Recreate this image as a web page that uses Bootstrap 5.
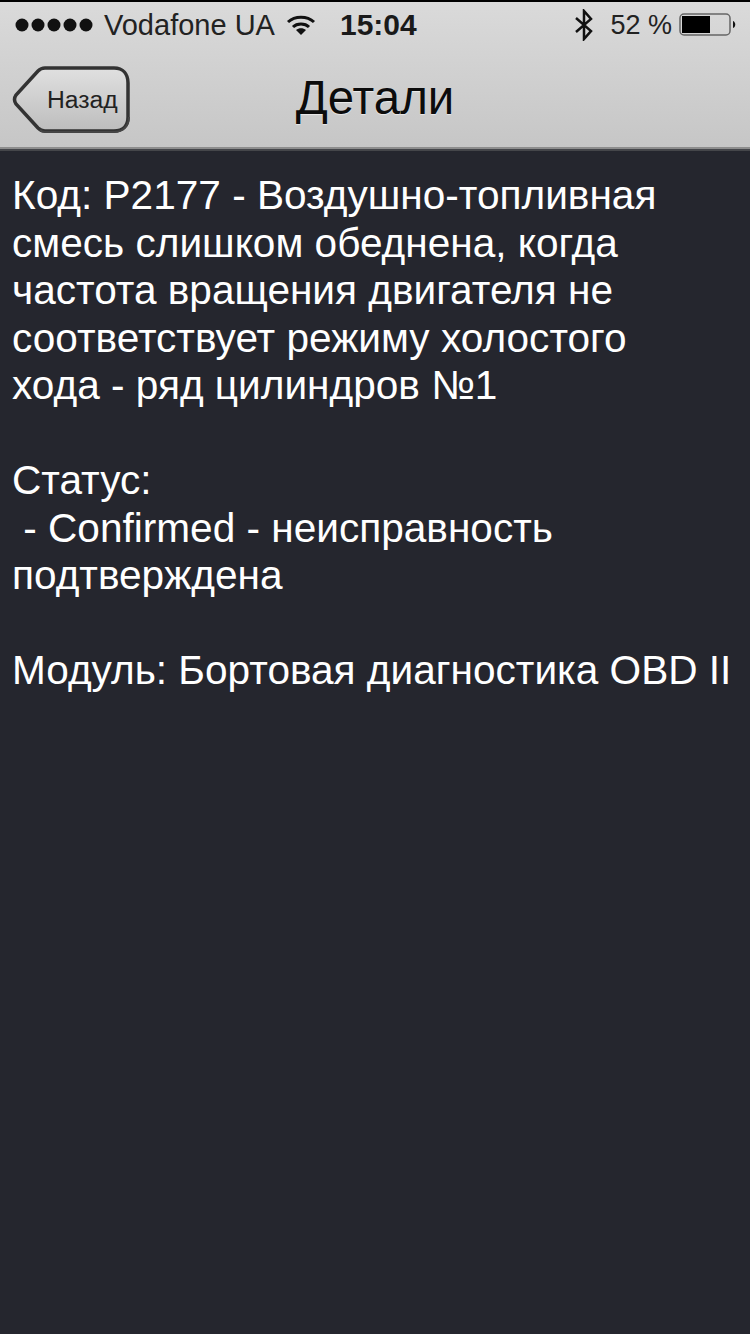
<!DOCTYPE html>
<html lang="ru">
<head>
    <meta charset="UTF-8">
    <title>Детали</title>
    <link href="https://cdn.jsdelivr.net/npm/bootstrap@5.3.0/dist/css/bootstrap.min.css" rel="stylesheet">
    <style>
        html, body { height: 100%; }
        body { background: #25262e; font-family: "Liberation Sans", Arial, sans-serif; color: #fff; overflow: hidden; }
        .top-area { height: 151px; border-top: 2px solid #000; background: linear-gradient(#dadada, #c6c6c6); border-bottom: 2px solid #45464a; box-shadow: inset 0 -2px 0 #8d8d8d; color: #111; }
        .status-row { height: 46px; font-size: 27px; padding-left: 15px; padding-right: 13px; color: #222; }
        .signal-dots { width: 82px; }
        .carrier { margin-left: 7px; width: 182px; font-size: 29px; margin-top: 2px; }
        .wifi-icon { width: 30px; height: 20px; }
        .clock { margin-left: 24px; font-weight: 700; font-size: 30px; color: #1a1a1a; margin-top: -1px; }
        .bt-icon { width: 20px; height: 32px; margin-right: 16px; }
        .percent { margin-right: 7px; }
        .title-row { height: 99px; }
        .back-btn { position: absolute; left: 12px; top: 18px; width: 120px; height: 68px; }
        .back-label { position: absolute; left: 47px; top: 38px; font-size: 24.7px; line-height: 28px; color: #222; }
        .page-title { font-size: 47.4px; line-height: 52px; color: #0c0c0c; text-shadow: 0 1px 1px rgba(255, 255, 255, .6); }
        .detail-text { padding: 21px 12px 0; font-size: 40.6px; line-height: 47.5px; white-space: pre-wrap; }
    </style>
</head>
<body>
    <div class="top-area">
        <div class="status-row d-flex align-items-center">
            <svg class="signal-dots" height="14" viewBox="0 0 82 14">
                <circle cx="7" cy="7" r="6.5" fill="#111"/><circle cx="23" cy="7" r="6.5" fill="#111"/><circle cx="39" cy="7" r="6.5" fill="#111"/><circle cx="55" cy="7" r="6.5" fill="#111"/><circle cx="71" cy="7" r="6.5" fill="#111"/>
            </svg>
            <span class="carrier text-nowrap">Vodafone UA</span>
            <svg class="wifi-icon" viewBox="0 0 30 20" fill="none" stroke="#111" stroke-width="3">
                <path d="M2 7C9 .5 21 .5 28 7"/><path d="M7 12C11 8 19 8 23 12"/><path d="M15 20L10 15C13 12.500 17 12.500 20 15Z" fill="#111" stroke="none"/>
            </svg>
            <span class="clock">15:04</span>
            <span class="ms-auto d-flex align-items-center">
                <svg class="bt-icon" viewBox="0 0 20 32" fill="none" stroke="#111" stroke-width="2.500"><path d="M2 9L17 22L10 30V2L17 10L2 23"/></svg>
                <span class="percent text-nowrap">52 %</span>
                <svg width="58" height="24" viewBox="0 0 58 24">
                    <rect x="1" y="1" width="50" height="21" rx="4" fill="none" stroke="#666" stroke-width="1.500"/>
                    <rect x="3" y="3" width="28" height="17" fill="#000"/>
                    <path d="M54 8C57 9 57 14 54 15Z" fill="#111"/>
                </svg>
            </span>
        </div>
        <div class="title-row position-relative d-flex align-items-center justify-content-center">
            <svg class="back-btn" viewBox="0 0 120 68">
                <defs><linearGradient id="btnFill" x1="0" y1="0" x2="0" y2="1"><stop offset="0" stop-color="#e0e0e0"/><stop offset="1" stop-color="#bdbdbd"/></linearGradient></defs>
                <path d="M33 2H102C111 2 116 8 116 17V51C116 60 111 65 102 65H33C30 65 28 64 26 62L4 38C2 35 2 32 4 29L26 5C28 3 30 2 33 2Z" fill="url(#btnFill)" stroke="#333" stroke-width="3.500"/>
                <path d="M28 64C29 65 31 66 33 66H102C111 66 117 60 117 51" fill="none" stroke="#444" stroke-width="2"/>
            </svg>
            <span class="back-label">Назад</span>
            <span class="page-title">Детали</span>
        </div>
    </div>
    <div class="detail-text">Код: P2177 - Воздушно-топливная
смесь слишком обеднена, когда
частота вращения двигателя не
соответствует режиму холостого
хода - ряд цилиндров №1

Статус:
 - Confirmed - неисправность
подтверждена

Модуль: Бортовая диагностика OBD II</div>
    <script src="https://cdn.jsdelivr.net/npm/bootstrap@5.3.0/dist/js/bootstrap.bundle.min.js"></script>
</body>
</html>
